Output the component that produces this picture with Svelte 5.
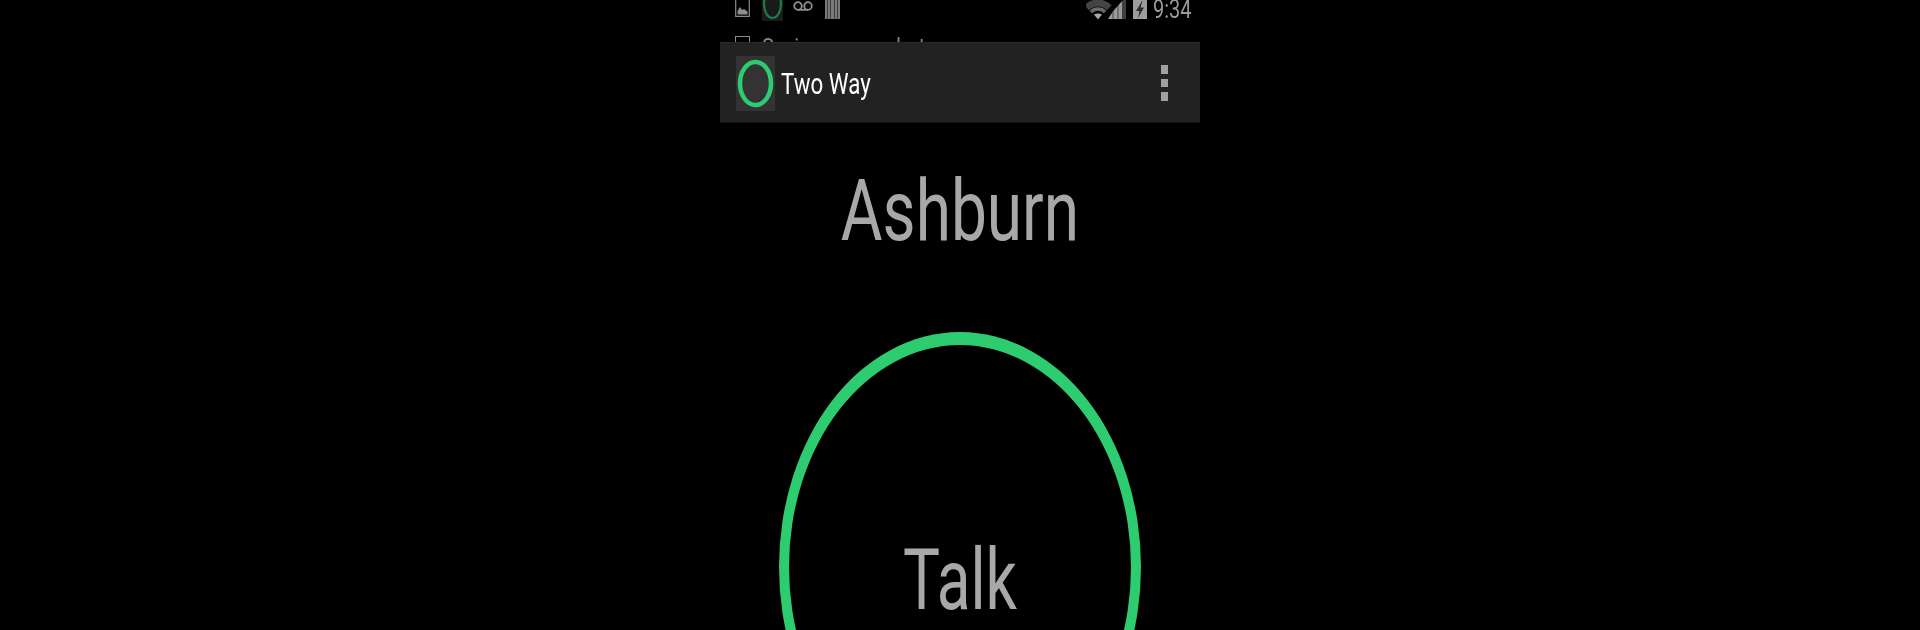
<script>
  const bars = [0, 1, 2, 3, 4];
</script>

<div class="page">
  <div class="phone">
    <div class="status">
      <div class="row top">
        <div class="notif">
          <svg class="ic pic" viewBox="0 0 15 20">
            <path d="M.7 -4H14.300V16.300H.7Z" fill="none" stroke="#8c8c8c" stroke-width="1.200" />
            <path d="M2.500 14.500V11L5 7l2 3 2-1 3.500 2.500v3Z" fill="#8f8f8f" />
          </svg>
          <div class="tile">
            <svg viewBox="0 0 21 21" class="tilering"><ellipse cx="10.500" cy="4" rx="8.500" ry="14" fill="none" stroke="#1f7a4a" stroke-width="2.200" /></svg>
          </div>
          <svg class="ic vm" viewBox="0 0 20 12">
            <circle cx="5" cy="6" r="3.800" fill="none" stroke="#8f8f8f" stroke-width="1.800" />
            <circle cx="15" cy="6" r="3.800" fill="none" stroke="#8f8f8f" stroke-width="1.800" />
            <path d="M5 9.800h10" stroke="#8f8f8f" stroke-width="1.800" />
          </svg>
          <div class="stripes">
            {#each bars as b (b)}<span></span>{/each}
          </div>
        </div>
        <div class="sys">
          <svg class="wifi" viewBox="0 0 40 20">
            <path d="M.7 7.700A16 16 0 0 1 23.300 7.700" fill="none" stroke="#444444" stroke-width="7" />
            <path d="M4.900 11.900A10 10 0 0 1 19.100 11.900" fill="none" stroke="#6a6a6a" stroke-width="3.500" />
            <path d="M12 19.500L8 14.500Q12 12.500 16 14.500Z" fill="#a8a8a8" />
            <path d="M22 19H36V0H34Z" fill="#9a9a9a" />
            <path d="M27 19V10M32 19V4" stroke="#555" stroke-width="1.200" />
            <path d="M36 0H40V19H36Z" fill="#3f3f3f" />
            <path d="M36 -1L17 20" stroke="#000" stroke-width="3" />
          </svg>
          <div class="battery">
            <svg viewBox="0 0 14 19"><path d="M9 1L3 11H6.500L5 18L11 7.500H7.500L9.500 1Z" fill="#2b2b2b" /></svg>
          </div>
          <span class="time">9:34</span>
        </div>
      </div>
      <div class="row second">
        <span class="box"></span>
        <span class="saving">Saving screenshot...</span>
      </div>
    </div>

    <header class="bar">
      <div class="logo">
        <svg viewBox="0 0 39 55"><ellipse cx="19.500" cy="27.500" rx="15.500" ry="21.500" fill="none" stroke="#2ecc71" stroke-width="4.500" /></svg>
      </div>
      <span class="title">Two Way</span>
      <div class="more"><i></i><i></i><i></i></div>
    </header>

    <main class="body">
      <h1 class="city">Ashburn</h1>
      <div class="talk">
        <svg class="ring" viewBox="0 0 362 470">
          <path fill-rule="evenodd" fill="#2ecc71" d="M0 235a181 235 0 1 0 362 0a181 235 0 1 0 -362 0ZM10 235a171 222 0 1 0 342 0a171 222 0 1 0 -342 0Z" />
        </svg>
        <span class="label">Talk</span>
      </div>
    </main>
  </div>
</div>

<style>
  :global(body) { margin: 0; background: #000; }
  .page { height: 630px; overflow: hidden; background: #000; display: flex; justify-content: center; font-family: Roboto, "Liberation Sans", sans-serif; }
  .phone { width: 480px; display: flex; flex-direction: column; }
  .status { height: 42px; overflow: hidden; flex: none; }
  .row { display: flex; align-items: flex-start; }
  .top { height: 22px; justify-content: space-between; padding: 0 8px 0 15px; }
  .notif { display: flex; align-items: flex-start; }
  .ic.pic { width: 15px; height: 20px; margin-right: 12px; }
  .tile { width: 21px; height: 21px; background: #1a1a1a; overflow: hidden; margin-right: 10px; }
  .tilering { display: block; width: 21px; height: 21px; }
  .vm { width: 20px; height: 12px; margin-right: 12px; margin-top: 0; }
  .stripes { display: flex; gap: 1px; width: 15px; height: 19px; background: #3c3c3c; }
  .stripes span { flex: 1; background: #7a7a7a; }
  .sys { display: flex; align-items: flex-start; }
  .wifi { width: 40px; height: 20px; margin-right: 7px; }
  .battery { width: 14px; height: 19px; background: #9c9c9c; margin-right: 6px; }
  .battery svg { display: block; width: 14px; height: 19px; }
  .time { color: #9a9a9a; font-size: 20px; font-weight: 400; line-height: 16px; display: block; transform: scaleY(1.3); transform-origin: 0 0; margin-top: -2px; width: 39px; filter: blur(0.4px); }
  .second { padding-left: 15px; gap: 12px; margin-top: 10px; color: #858585; font-size: 20px; line-height: 24px; }
  .box { width: 15px; height: 15px; border: 1px solid #8c8c8c; box-sizing: border-box; margin-top: 4px; flex: none; }
  .saving { display: block; white-space: nowrap; transform: scaleY(1.2); transform-origin: 0 0; }
  .bar { height: 81px; flex: none; background: #222222; border-top: 1px solid #2a2a2a; border-bottom: 1px solid #141414; box-sizing: border-box; display: flex; align-items: center; padding: 1px 0 0 16px; }
  .logo { width: 39px; height: 55px; background: #333333; flex: none; margin-right: 6px; }
  .logo svg { display: block; width: 39px; height: 55px; }
  .title { color: #fff; font-size: 24px; font-weight: 400; display: inline-block; margin-top: 2px; transform: scale(0.93, 1.24); transform-origin: 0 50%; filter: blur(0.3px); }
  .more { margin-left: auto; margin-right: 32px; display: flex; flex-direction: column; gap: 5px; }
  .more i { display: block; width: 7px; height: 8.500px; background: #a0a0a0; }
  .body { display: flex; flex-direction: column; align-items: center; }
  .city { margin: 47px 0 0; height: 84px; color: #a8a8a8; font-size: 64px; font-weight: 400; line-height: 84px; transform: scale(1, 1.32); }
  .talk { position: relative; margin-top: 78px; width: 362px; height: 470px; flex: none; }
  .ring { display: block; width: 362px; height: 470px; }
  .label { position: absolute; top: 211px; left: 0; right: 0; text-align: center; color: #a8a8a8; font-size: 64px; font-weight: 400; line-height: 76px; transform: scale(0.97, 1.32); }
</style>
